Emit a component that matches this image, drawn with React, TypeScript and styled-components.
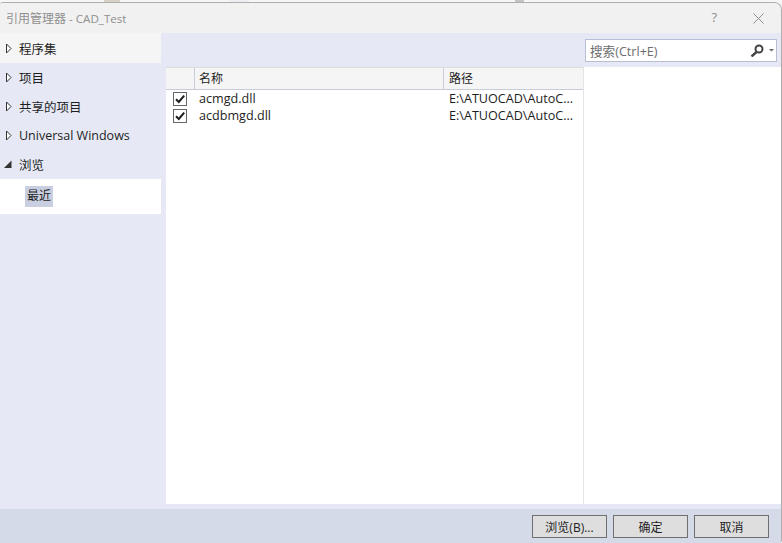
import React from "react";
import styled, { createGlobalStyle } from "styled-components";

const Global = createGlobalStyle`
  html, body { margin: 0; padding: 0; width: 782px; height: 543px; overflow: hidden; background: #f4f4f4; }
  #root { width: 782px; height: 543px; }
  * { box-sizing: border-box; }
`;

const cjk = `"Open Sans", "Noto Sans CJK SC", sans-serif`;

const Page = styled.div`
  width: 782px;
  height: 543px;
  background: #f6f6f6;
  font-family: ${cjk};
  font-size: 12.6px;
  color: #1e1e1e;
`;
const Strip = styled.div`
  height: 2px;
  display: flex;
`;
const Mark = styled.span<{ $left: number; $width: number; $color: string }>`
  width: ${(p) => p.$width}px;
  margin-left: ${(p) => p.$left}px;
  background: ${(p) => p.$color};
`;
const Win = styled.div`
  height: 541px;
  display: flex;
  flex-direction: column;
  border-top: 1px solid #aeaeae;
  border-right: 1px solid #aeaeae;
  border-radius: 3px 8px 3px 0;
  overflow: hidden;
  background: #e6e9f5;
`;
const TitleBar = styled.div`
  height: 30px;
  flex: none;
  display: flex;
  align-items: center;
  padding: 0 17px 0 6px;
  background: #f1f1f1;
`;
const Title = styled.div`
  flex: 1;
  font-size: 12px;
  color: #8f8f8f;
`;
const TitleProject = styled.span`
  font-size: 11.6px;
`;
const Help = styled.div`
  font-size: 13px;
  color: #8f8f8f;
  margin: -2px 36px 0 0;
`;
const Body = styled.div`
  flex: 1;
  min-height: 0;
  display: flex;
`;
const Nav = styled.div`
  width: 161px;
  flex: none;
  margin-right: 5px;
`;
const NavRow = styled.div<{ $selected?: boolean }>`
  height: ${(p) => (p.$selected ? 30 : 29)}px;
  padding: ${(p) => (p.$selected ? "1px" : "0")} 0 0 4px;
  display: flex;
  align-items: center;
  gap: 7px;
  background: ${(p) => (p.$selected ? "#f5f5f5" : "transparent")};
`;
const NavLabel = styled.span`
  font-size: 12.5px;
`;
const Sub = styled.div`
  height: 35px;
  background: #fff;
  display: flex;
  align-items: center;
  padding-left: 25px;
`;
const SubLabel = styled.span`
  background: #c9cfe0;
  padding: 0 2px;
  height: 21px;
  line-height: 20px;
  font-size: 12px;
`;
const Main = styled.div`
  flex: 1;
  min-width: 0;
  display: flex;
  flex-direction: column;
`;
const Top = styled.div`
  height: 34px;
  flex: none;
  display: flex;
  justify-content: flex-end;
  padding: 6px 4px 0 0;
`;
const Search = styled.div`
  width: 192px;
  height: 23px;
  background: #fff;
  border: 1px solid #b9bfd2;
  display: flex;
  align-items: center;
  padding: 0 2px 0 4px;
  color: #6d6d6d;
`;
const SearchText = styled.span`
  flex: 1;
`;
const Panels = styled.div`
  height: 437px;
  flex: none;
  display: flex;
  background: #fff;
`;
const List = styled.div`
  width: 418px;
  flex: none;
  border-right: 1px solid #e4e4e4;
`;
const Head = styled.div`
  height: 23px;
  display: grid;
  grid-template-columns: 29px 249px 1fr;
  background: #f5f5f5;
  border-top: 1px solid #dcdcdc;
  border-bottom: 1px solid #c8ccd8;
`;
const HeadCell = styled.div`
  display: flex;
  align-items: center;
  padding: 0 0 1px 4px;
  font-size: 12px;
  border-right: 1px solid #c8ccd8;
  &:last-child { border-right: none; padding-left: 5px; }
`;
const Row = styled.div`
  height: 17px;
  display: grid;
  grid-template-columns: 33px 250px 1fr;
  align-items: center;
  line-height: 17px;
`;
const CheckCell = styled.div`
  display: flex;
  align-items: center;
  padding-left: 7px;
`;
const Box = styled.div`
  width: 14px;
  height: 14px;
  background: #fff;
  border: 1px solid #666;
  display: flex;
  align-items: center;
  justify-content: center;
`;
const Footer = styled.div`
  height: 34px;
  flex: none;
  background: #d5dae8;
  display: flex;
  justify-content: flex-end;
  align-items: center;
  gap: 6px;
  padding: 1px 12px 0 0;
`;
const Btn = styled.div`
  width: 75px;
  height: 23px;
  background: #dedede;
  border: 1px solid #6f6f6f;
  font-size: 12px;
  display: flex;
  align-items: center;
  justify-content: center;
`;

const Closed = () => (
  <svg width="8" height="11" viewBox="0 0 8 11"><path d="M2.5 1 7 5.5 2.5 10Z" fill="#fff" stroke="#333" strokeWidth="1" /></svg>
);
const Open = () => (
  <svg width="8" height="11" viewBox="0 0 8 11"><path d="M0 9 7.5 1.5V9Z" fill="#333" /></svg>
);
const Check = () => (
  <svg width="12" height="12" viewBox="0 0 12 12"><path d="M2 6.2 4.8 9 10.2 2.6" fill="none" stroke="#1e1e1e" strokeWidth="2" /></svg>
);

const rows = ["acmgd.dll", "acdbmgd.dll"];
const navItems = ["项目", "共享的项目", "Universal Windows"];

export default function App() {
  return (
    <Page>
      <Global />
      <Strip>
        <Mark $left={104} $width={16} $color="#d8d0c4" />
        <Mark $left={109} $width={20} $color="#eeeef2" />
        <Mark $left={266} $width={9} $color="#c4c4c4" />
      </Strip>
      <Win>
        <TitleBar>
          <Title>引用管理器<TitleProject> - CAD_Test</TitleProject></Title>
          <Help>?</Help>
          <svg width="11" height="11" viewBox="0 0 11 11"><path d="M.5.5 10.5 10.5M10.5.5.5 10.5" stroke="#8f8f8f" strokeWidth="1" /></svg>
        </TitleBar>
        <Body>
          <Nav>
            <NavRow $selected><Closed /><NavLabel>程序集</NavLabel></NavRow>
            {navItems.map((n) => (
              <NavRow key={n}><Closed /><NavLabel>{n}</NavLabel></NavRow>
            ))}
            <NavRow><Open /><NavLabel>浏览</NavLabel></NavRow>
            <Sub><SubLabel>最近</SubLabel></Sub>
          </Nav>
          <Main>
            <Top>
              <Search>
                <SearchText>搜索(Ctrl+E)</SearchText>
                <svg width="25" height="13" viewBox="0 0 25 13">
                  <circle cx="10" cy="5" r="3.5" fill="none" stroke="#444" strokeWidth="2" />
                  <path d="M7.5 8 2.5 12.5" stroke="#444" strokeWidth="2.4" />
                  <path d="M20 5h5l-2.5 2.5Z" fill="#666" />
                </svg>
              </Search>
            </Top>
            <Panels>
              <List>
                <Head>
                  <HeadCell />
                  <HeadCell>名称</HeadCell>
                  <HeadCell>路径</HeadCell>
                </Head>
                {rows.map((r) => (
                  <Row key={r}>
                    <CheckCell><Box><Check /></Box></CheckCell>
                    <span>{r}</span>
                    <span>E:\ATUOCAD\AutoC...</span>
                  </Row>
                ))}
              </List>
            </Panels>
          </Main>
        </Body>
        <Footer>
          <Btn>浏览(B)...</Btn>
          <Btn>确定</Btn>
          <Btn>取消</Btn>
        </Footer>
      </Win>
    </Page>
  );
}
